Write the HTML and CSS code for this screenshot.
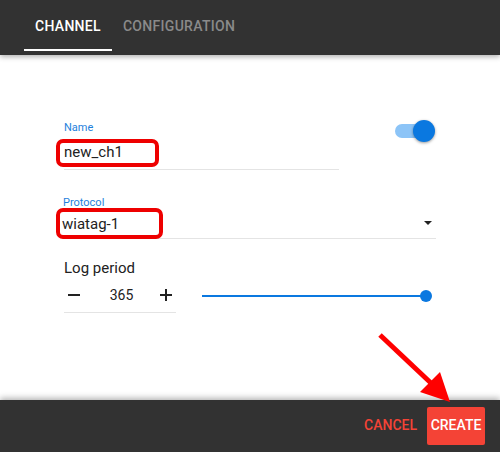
FILE: index.html
```html
<!DOCTYPE html>
<html lang="en">
<head>
    <meta charset="UTF-8">
    <meta name="viewport" content="width=device-width, initial-scale=1.0">
    <title>New channel</title>
    <link rel="stylesheet" href="styles.css">
</head>
<body>
    <div class="dialog">
        <header class="tabs">
            <div class="tab active">CHANNEL</div>
            <div class="tab">CONFIGURATION</div>
        </header>

        <main class="form">
            <div class="row">
                <div class="field name-field">
                    <label class="field-label">Name</label>
                    <div class="field-input">new_ch1</div>
                    <span class="mark mark-name"></span>
                </div>
                <div class="toggle">
                    <span class="toggle-track"></span>
                    <span class="toggle-thumb"></span>
                </div>
            </div>

            <div class="field select-field">
                <label class="field-label">Protocol</label>
                <div class="field-input select">
                    <span>wiatag-1</span>
                    <span class="caret"></span>
                </div>
                <span class="mark mark-protocol"></span>
            </div>

            <div class="period">
                <div class="period-label">Log period</div>
                <div class="period-row">
                    <div class="stepper">
                        <span class="step-btn minus"></span>
                        <span class="step-value">365</span>
                        <span class="step-btn plus"></span>
                    </div>
                    <div class="slider">
                        <span class="slider-track"></span>
                        <span class="slider-thumb"></span>
                    </div>
                </div>
            </div>
        </main>

        <footer class="actions">
            <button class="btn-cancel">CANCEL</button>
            <button class="btn-create">CREATE</button>
        </footer>

        <!-- annotation arrow -->
        <svg class="arrow" width="500" height="452" viewBox="0 0 500 452">
            <line x1="380" y1="335" x2="432" y2="384" stroke="#ff0000" stroke-width="5"/>
            <polygon points="450,402 420,392 440,372" fill="#ff0000"/>
        </svg>
    </div>
</body>
</html>
```

FILE: styles.css
```css
body {
    margin: 0;
    font-family: Roboto, "Liberation Sans", Arial, sans-serif;
    background: #ffffff;
    color: #222;
}

.dialog {
    position: relative;
    width: 500px;
    height: 452px;
    display: flex;
    flex-direction: column;
    overflow: hidden;
}

.tabs {
    height: 55px;
    background-color: #323232;
    display: flex;
    padding-left: 24px;
    box-shadow: 0 2px 5px rgba(0, 0, 0, 0.3);
    z-index: 1;
}

.tab {
    height: 51px;
    padding: 0 11px;
    box-sizing: border-box;
    display: flex;
    align-items: center;
    font-size: 14px;
    font-weight: 500;
    color: #8a8a8a;
    letter-spacing: 0.3px;
}

.tab.active {
    color: #ffffff;
    border-bottom: 2px solid #ffffff;
    padding-top: 2px;
}

.form {
    flex: 1;
    padding: 66px 64px 0 64px;
}

.row {
    display: flex;
    justify-content: space-between;
}

.field {
    position: relative;
}

.name-field {
    width: 275px;
}

.field-label {
    display: block;
    font-size: 11px;
    line-height: 14px;
    color: #1e7fdc;
}

.field-input {
    font-size: 15px;
    height: 34px;
    line-height: 34px;
    border-bottom: 1px solid #e4e4e4;
}

.select-field {
    margin-top: 26px;
}

.select-field .field-label {
    margin-left: -1px;
}

.field-input.select {
    height: 28px;
    line-height: 24px;
    display: flex;
    justify-content: space-between;
    align-items: center;
    margin-left: -2px;
    padding-right: 4px;
}

.caret {
    width: 0;
    height: 0;
    border-left: 4px solid transparent;
    border-right: 4px solid transparent;
    border-top: 4px solid #222;
    margin-top: -2px;
}

.mark {
    position: absolute;
    border: 4px solid #ee0000;
    border-radius: 7px;
    box-sizing: border-box;
}

.mark-name {
    left: -8px;
    top: 18px;
    width: 103px;
    height: 28px;
}

.mark-protocol {
    left: -8px;
    top: 12px;
    width: 107px;
    height: 31px;
}

.toggle {
    position: relative;
    width: 40px;
    height: 22px;
    margin-top: -1px;
    margin-right: 1px;
}

.toggle-track {
    position: absolute;
    left: 0;
    top: 4px;
    width: 32px;
    height: 14px;
    border-radius: 7px;
    background: #8cc4f7;
}

.toggle-thumb {
    position: absolute;
    right: 0;
    top: 0;
    width: 22px;
    height: 22px;
    border-radius: 50%;
    background: #0a78e0;
    box-shadow: 0 1px 3px rgba(0, 0, 0, 0.4);
}

.period {
    margin-top: 20px;
}

.period-label {
    font-size: 15px;
    line-height: 18px;
}

.period-row {
    display: flex;
    align-items: center;
    margin-top: 1px;
}

.stepper {
    width: 112px;
    height: 35px;
    display: flex;
    align-items: center;
    justify-content: space-between;
    border-bottom: 1px solid #e4e4e4;
    padding: 0 4px;
    box-sizing: border-box;
}

.step-value {
    font-size: 14px;
    margin-left: 3px;
}

.step-btn {
    position: relative;
    width: 12px;
    height: 12px;
}

.step-btn::before,
.plus::after {
    content: "";
    position: absolute;
    background: #222;
}

.step-btn::before {
    left: 0;
    top: 5px;
    width: 12px;
    height: 2px;
}

.plus::after {
    left: 5px;
    top: 0;
    width: 2px;
    height: 12px;
}

.slider {
    position: relative;
    flex: 1;
    height: 12px;
    margin-left: 26px;
    margin-right: 4px;
}

.slider-track {
    position: absolute;
    left: 0;
    right: 6px;
    top: 5px;
    height: 2px;
    background: #0a78e0;
}

.slider-thumb {
    position: absolute;
    right: 0;
    top: 0;
    width: 12px;
    height: 12px;
    border-radius: 50%;
    background: #0a78e0;
}

.actions {
    height: 52px;
    background-color: #323232;
    display: flex;
    align-items: center;
    justify-content: flex-end;
    padding-right: 15px;
    box-shadow: 0 -2px 6px rgba(0, 0, 0, 0.3);
}

.actions button {
    font-family: inherit;
    font-size: 14px;
    font-weight: 500;
    border: none;
    cursor: pointer;
}

.btn-cancel {
    background: none;
    color: #f44336;
    padding: 0;
    margin-right: 10px;
    margin-top: -2px;
}

.btn-create {
    background: #f44336;
    color: #ffffff;
    width: 58px;
    height: 38px;
    padding: 0 0 2px 0;
    border-radius: 2px;
}

.arrow {
    position: absolute;
    left: 0;
    top: 0;
    pointer-events: none;
    z-index: 2;
}
```
